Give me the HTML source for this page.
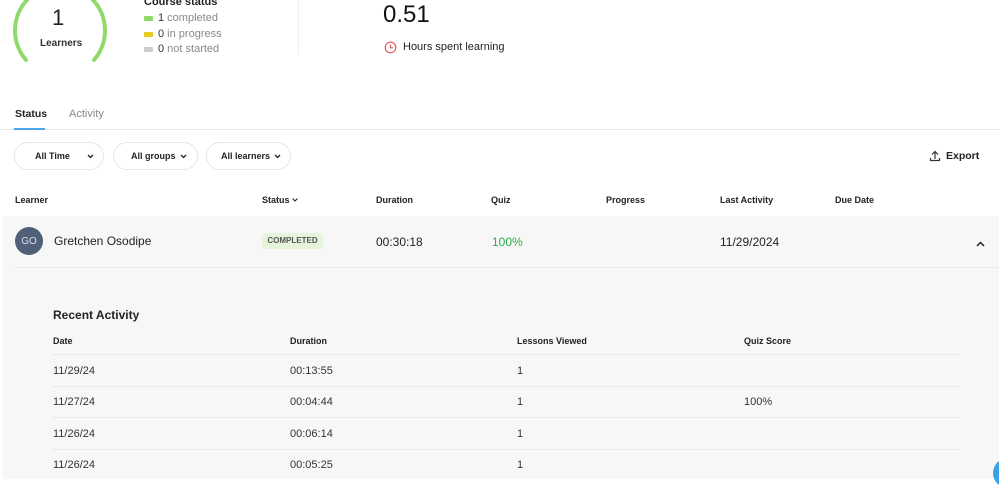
<!DOCTYPE html>
<html><head><style>
*{margin:0;padding:0;box-sizing:border-box}
body{width:999px;height:479px;overflow:hidden;background:#fff;font-family:"Liberation Sans",sans-serif;color:#222;position:relative}
.a{position:absolute;white-space:nowrap}
.b{font-weight:bold}
.pill{position:absolute;height:28px;border:1px solid #e6e6e6;border-radius:14px;font-size:9px;font-weight:bold;line-height:26px}
.pill svg{position:absolute;top:11px}
.h{font-size:9px;font-weight:bold;top:195px}
.rh{font-size:9px;font-weight:bold;top:336px}
.line{position:absolute;left:53px;width:907px;height:1px;background:#e8e8e8}
.c{font-size:11px;color:#333}
</style></head><body>
<svg class="a" style="left:0;top:0" width="120" height="70"><path d="M26 60 A45 45 0 1 1 94 60" fill="none" stroke="#8fd96a" stroke-width="4" stroke-linecap="round"/></svg>
<div class="a" style="left:52px;top:5px;font-size:22px">1</div>
<div class="a b" style="left:40px;top:38px;font-size:10px;color:#333">Learners</div>
<div class="a b" style="left:144px;top:-4px;font-size:11px">Course status</div>
<div class="a" style="left:144px;top:16px;width:9px;height:5px;background:#8fd96a;border-radius:1px"></div>
<div class="a" style="left:158px;top:12px;font-size:11px;color:#888"><span style="color:#333">1</span> completed</div>
<div class="a" style="left:144px;top:32px;width:9px;height:5px;background:#e8cc1c;border-radius:1px"></div>
<div class="a" style="left:158px;top:28px;font-size:11px;color:#888"><span style="color:#333">0</span> in progress</div>
<div class="a" style="left:144px;top:47px;width:9px;height:5px;background:#ccc;border-radius:1px"></div>
<div class="a" style="left:158px;top:43px;font-size:11px;color:#888"><span style="color:#333">0</span> not started</div>
<div class="a" style="left:298px;top:0;width:1px;height:55px;background:#eee"></div>
<div class="a" style="left:383px;top:1px;font-size:24px;color:#111">0.51</div>
<svg class="a" style="left:384px;top:41px" width="13" height="13"><circle cx="6.5" cy="6.5" r="5.3" fill="none" stroke="#e05a5a" stroke-width="1.2"/><path d="M6.5 3.5V6.8H9" fill="none" stroke="#e05a5a" stroke-width="1.2"/></svg>
<div class="a" style="left:403px;top:41px;font-size:11px">Hours spent learning</div>
<div class="a b" style="left:15px;top:108px;font-size:10.5px">Status</div>
<div class="a" style="left:69px;top:108px;font-size:11px;color:#888">Activity</div>
<div class="a" style="left:0;top:129px;width:999px;height:1px;background:#e6e6e6"></div>
<div class="a" style="left:14px;top:128px;width:31px;height:2px;background:#4aa8e8"></div>
<div class="pill" style="left:14px;top:142px;width:90px;padding-left:20px">All Time<svg style="left:72px" width="7" height="5"><path d="M1 1L3.5 3.5L6 1" fill="none" stroke="#222" stroke-width="1.3"/></svg></div>
<div class="pill" style="left:113px;top:142px;width:85px;padding-left:17px">All groups<svg style="left:66px" width="7" height="5"><path d="M1 1L3.5 3.5L6 1" fill="none" stroke="#222" stroke-width="1.3"/></svg></div>
<div class="pill" style="left:206px;top:142px;width:85px;padding-left:14px">All learners<svg style="left:67px" width="7" height="5"><path d="M1 1L3.5 3.5L6 1" fill="none" stroke="#222" stroke-width="1.3"/></svg></div>
<svg class="a" style="left:929px;top:150px" width="12" height="12"><path d="M6 9V2M3 4.5L6 1.5L9 4.5M1.5 8V10.5H10.5V8" fill="none" stroke="#333" stroke-width="1.2"/></svg>
<div class="a b" style="left:946px;top:150px;font-size:10.5px">Export</div>
<div class="a h" style="left:15px">Learner</div>
<div class="a h" style="left:262px">Status</div>
<svg class="a" style="left:292px;top:198px" width="6" height="4"><path d="M0.5 0.5L3 3L5.5 0.5" fill="none" stroke="#222" stroke-width="1"/></svg>
<div class="a h" style="left:376px">Duration</div>
<div class="a h" style="left:491px">Quiz</div>
<div class="a h" style="left:606px">Progress</div>
<div class="a h" style="left:720px">Last Activity</div>
<div class="a h" style="left:835px">Due Date</div>
<div class="a" style="left:3px;top:216px;width:996px;height:263px;background:#f7f7f7"></div>
<div class="a" style="left:14px;top:267px;width:985px;height:1px;background:#ececec"></div>
<div class="a" style="left:15px;top:227px;width:28px;height:28px;border-radius:50%;background:#4f6078;color:#dde;font-size:10px;display:flex;align-items:center;justify-content:center">GO</div>
<div class="a" style="left:54px;top:234px;font-size:12px">Gretchen Osodipe</div>
<div class="a b" style="left:262px;top:233px;width:61px;height:16px;background:#e6f4dc;border-radius:3px;font-size:8px;line-height:16px;text-align:center;color:#555">COMPLETED</div>
<div class="a" style="left:376px;top:235px;font-size:12px">00:30:18</div>
<div class="a" style="left:492px;top:235px;font-size:12px;color:#2eaa4a">100%</div>
<div class="a" style="left:720px;top:235px;font-size:12px">11/29/2024</div>
<svg class="a" style="left:976px;top:241px" width="9" height="6"><path d="M1 5L4.5 1.5L8 5" fill="none" stroke="#222" stroke-width="1.5"/></svg>
<div class="a b" style="left:53px;top:308px;font-size:12px">Recent Activity</div>
<div class="a rh" style="left:53px">Date</div>
<div class="a rh" style="left:290px">Duration</div>
<div class="a rh" style="left:517px">Lessons Viewed</div>
<div class="a rh" style="left:744px">Quiz Score</div>
<div class="line" style="top:354px"></div>
<div class="line" style="top:386px"></div>
<div class="line" style="top:417px"></div>
<div class="line" style="top:449px"></div>
<div class="a c" style="left:53px;top:365px">11/29/24</div><div class="a c" style="left:290px;top:365px">00:13:55</div><div class="a c" style="left:517px;top:365px">1</div>
<div class="a c" style="left:53px;top:396px">11/27/24</div><div class="a c" style="left:290px;top:396px">00:04:44</div><div class="a c" style="left:517px;top:396px">1</div><div class="a c" style="left:744px;top:396px">100%</div>
<div class="a c" style="left:53px;top:428px">11/26/24</div><div class="a c" style="left:290px;top:428px">00:06:14</div><div class="a c" style="left:517px;top:428px">1</div>
<div class="a c" style="left:53px;top:459px">11/26/24</div><div class="a c" style="left:290px;top:459px">00:05:25</div><div class="a c" style="left:517px;top:459px">1</div>
<div class="a" style="left:993px;top:458px;width:30px;height:30px;border-radius:50%;background:#3aa0e8"></div>
</body></html>
